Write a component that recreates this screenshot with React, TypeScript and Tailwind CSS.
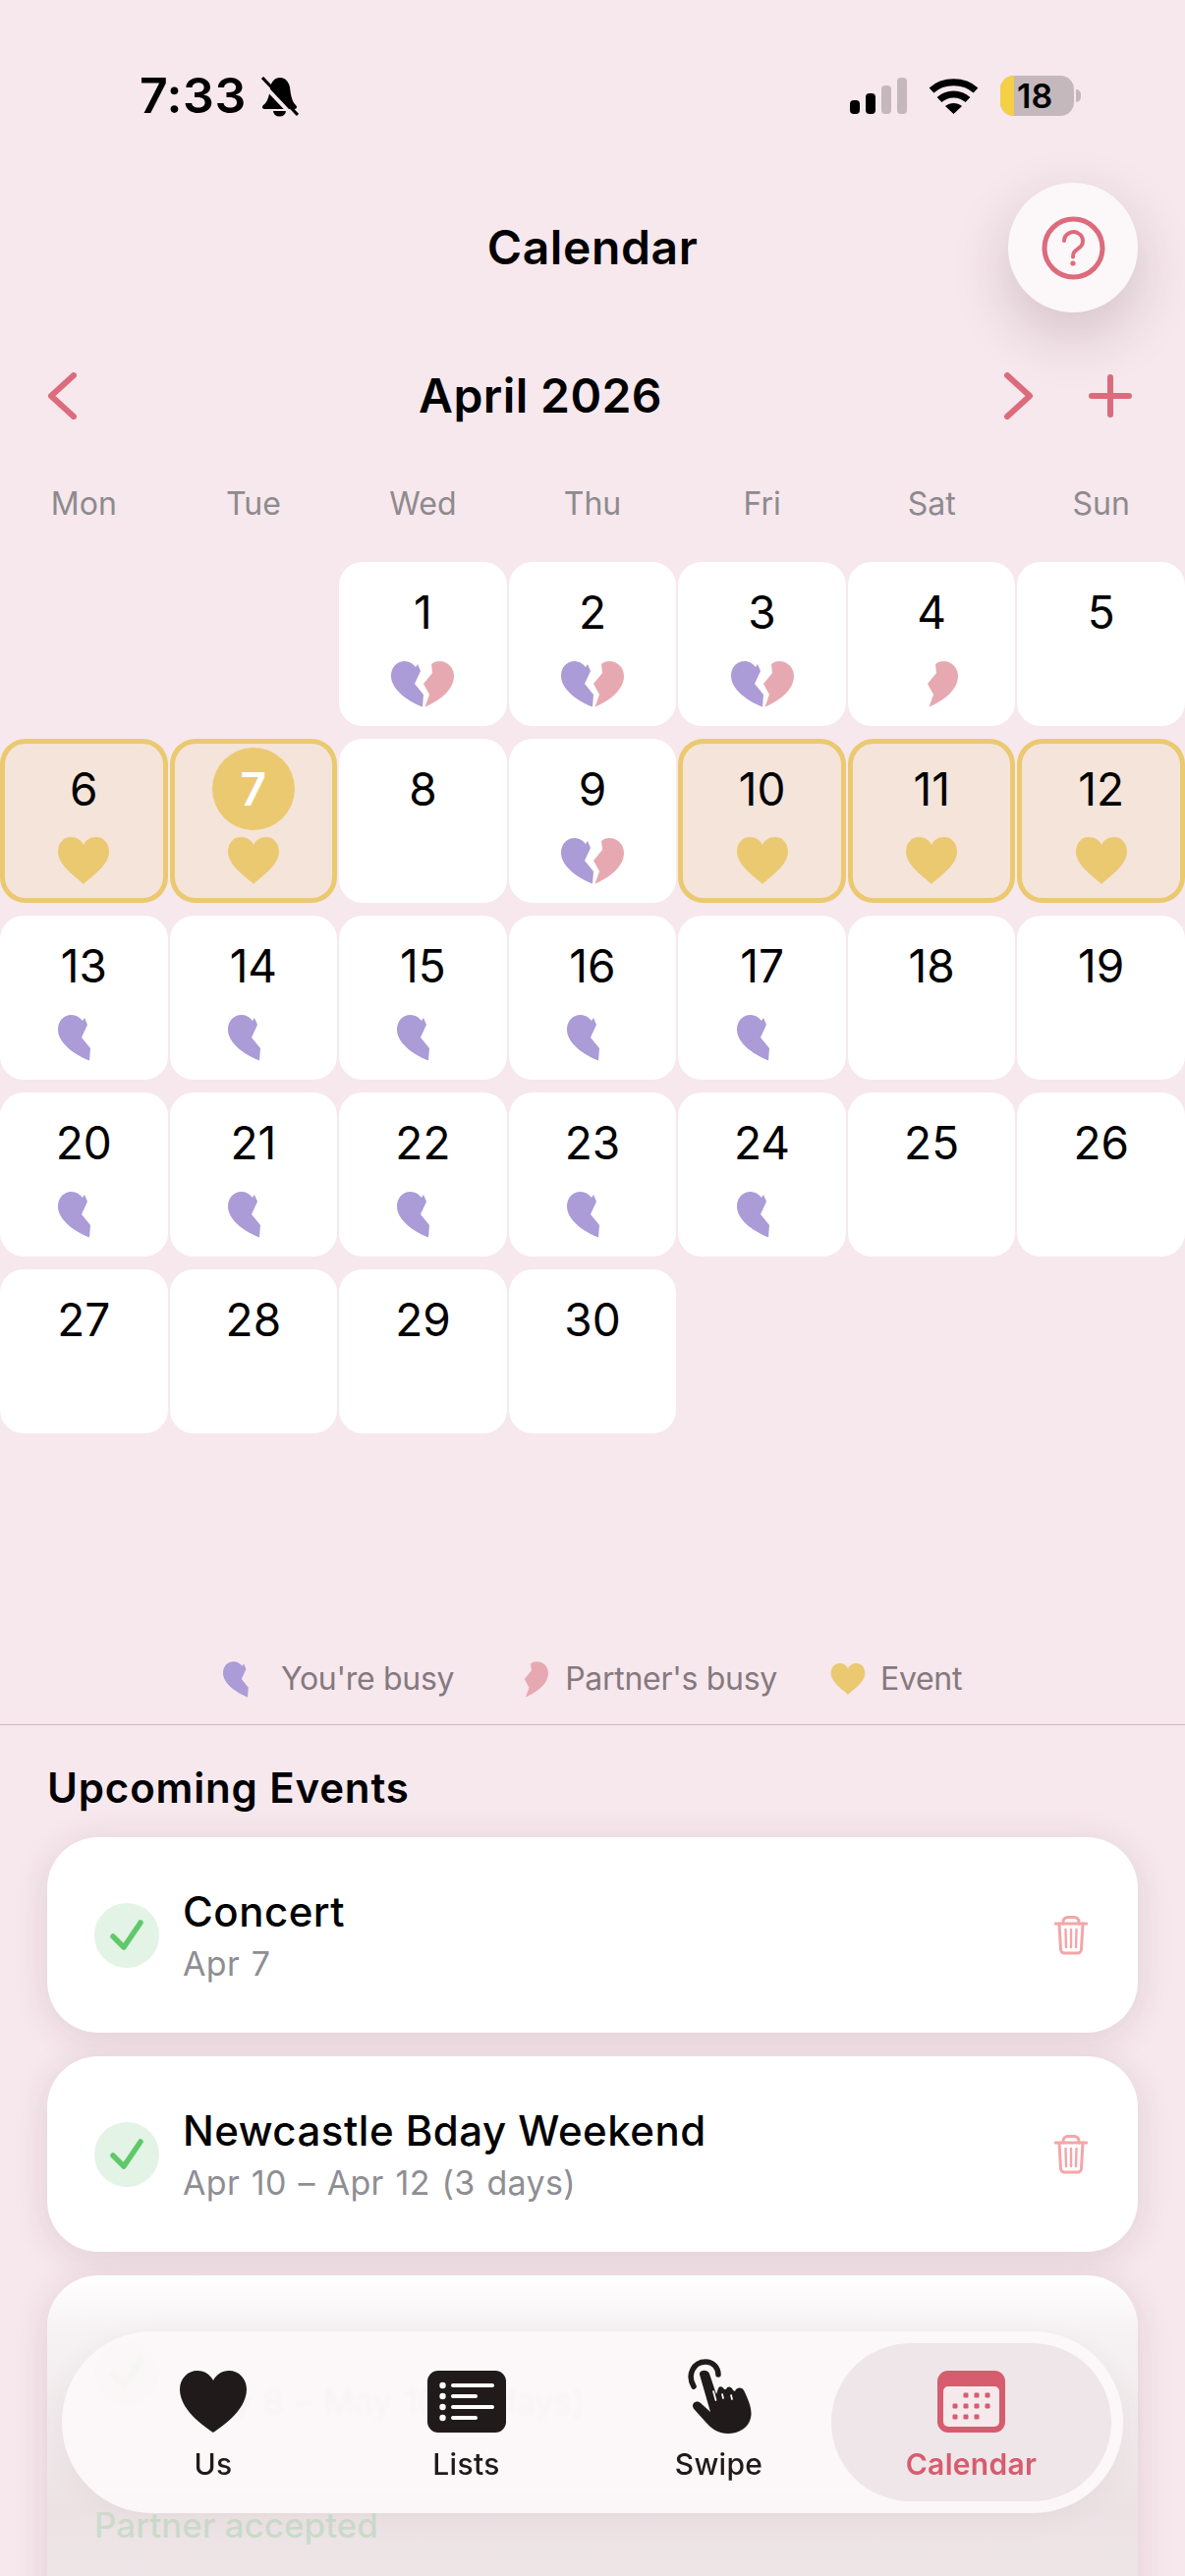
import React from 'react';

type Busy = 'me' | 'partner' | 'both' | 'event' | null;

interface DayProps {
  day: number;
  busy?: Busy;
  today?: boolean;
}

const WEEKDAYS = ['Mon', 'Tue', 'Wed', 'Thu', 'Fri', 'Sat', 'Sun'];

const DAYS: DayProps[] = [
  { day: 1, busy: 'both' },
  { day: 2, busy: 'both' },
  { day: 3, busy: 'both' },
  { day: 4, busy: 'partner' },
  { day: 5 },
  { day: 6, busy: 'event' },
  { day: 7, busy: 'event', today: true },
  { day: 8 },
  { day: 9, busy: 'both' },
  { day: 10, busy: 'event' },
  { day: 11, busy: 'event' },
  { day: 12, busy: 'event' },
  { day: 13, busy: 'me' },
  { day: 14, busy: 'me' },
  { day: 15, busy: 'me' },
  { day: 16, busy: 'me' },
  { day: 17, busy: 'me' },
  { day: 18 },
  { day: 19 },
  { day: 20, busy: 'me' },
  { day: 21, busy: 'me' },
  { day: 22, busy: 'me' },
  { day: 23, busy: 'me' },
  { day: 24, busy: 'me' },
  { day: 25 },
  { day: 26 },
  { day: 27 },
  { day: 28 },
  { day: 29 },
  { day: 30 },
];

const BrokenHeart = ({ left, right, className }: { left?: boolean; right?: boolean; className: string }) => (
  <svg viewBox="0 0 64 47" className={className}>
    {left && (
      <path
        fill="#ab9bd7"
        d="M32 46.5 L33 34 L24 23 L30 10 L27 3 L25 6 C22 2 18 0 14 0 C5 0 0 7 0 15 C0 30 20 42 32 46.5Z"
      />
    )}
    {right && (
      <path
        fill="#e7a9b1"
        d="M34.5 46.5 L39 34 L33 23 L42 12 L41 3 C43 1 46 0 49 0 C58 0 64 7 64 15 C64 30 48 41 34.5 46.5Z"
      />
    )}
  </svg>
);

const GoldHeart = ({ className }: { className: string }) => (
  <svg viewBox="0 0 52 48" className={className}>
    <path
      fill="#ebc971"
      d="M26 48 C22 43 0 30 0 15 C0 6 6 0 13 0 C19 0 24 3 26 8 C28 3 33 0 39 0 C46 0 52 6 52 15 C52 30 30 43 26 48Z"
    />
  </svg>
);

const DayCell = ({ day, busy, today }: DayProps) => {
  const isEvent = busy === 'event';
  return (
    <div
      className={
        isEvent
          ? 'h-[167px] rounded-[26px] bg-[#f5e4da] ring-[5px] ring-inset ring-[#ebc971] flex flex-col items-center pt-[26px]'
          : 'h-[167px] rounded-[24px] bg-white flex flex-col items-center pt-[26px]'
      }
    >
      {today ? (
        <div className="w-[84px] h-[84px] -my-[17px] rounded-full bg-[#ebc971] flex items-center justify-center text-white text-[46px] font-semibold leading-[50px]">
          {day}
        </div>
      ) : (
        <div className="h-[50px] text-[46px] leading-[50px] text-black">{day}</div>
      )}
      <div className="mt-[24px] h-[48px] flex items-center justify-center">
        {isEvent && <GoldHeart className="w-[52px] h-[48px]" />}
        {busy === 'both' && <BrokenHeart left right className="w-[64px] h-[47px]" />}
        {busy === 'me' && <BrokenHeart left className="ml-[12px] w-[64px] h-[47px]" />}
        {busy === 'partner' && <BrokenHeart right className="mr-[10px] w-[64px] h-[47px]" />}
      </div>
    </div>
  );
};

const CheckBadge = () => (
  <div className="w-[66px] h-[66px] shrink-0 rounded-full bg-[#e3f3e6]">
    <svg viewBox="0 0 66 66" className="w-[66px] h-[66px]">
      <path d="M19 34 L30 45 L47 20" fill="none" stroke="#5fc96a" strokeWidth="5.5" strokeLinecap="round" strokeLinejoin="round" />
    </svg>
  </div>
);

const TrashIcon = () => (
  <svg viewBox="0 0 34 40" className="w-[34px] h-[40px] shrink-0" fill="none" stroke="#f3a6a8" strokeLinecap="round">
    <path d="M1 8 H33" strokeWidth="3" />
    <path d="M9 8 V6 a4.5 4.5 0 0 1 4.5-4.5 h7 a4.5 4.5 0 0 1 4.5 4.5 V8" strokeWidth="3" />
    <path d="M5 8 L6.5 34 a4 4 0 0 0 4 4 h13 a4 4 0 0 0 4-4 L29 8" strokeWidth="3" />
    <path d="M11.5 14 L12 32 M17 14 V32 M22.5 14 L22 32" strokeWidth="2.4" />
  </svg>
);

const EventRow = ({ title, date }: { title?: string; date: string }) => (
  <div className="h-[199px] flex items-center pl-[48px] pr-[51px] gap-[24px]">
    <CheckBadge />
    <div className="flex-1">
      <div className="h-[50px] mt-[2px] text-[42px] leading-[50px] font-medium tracking-[0.5px] text-black">{title}</div>
      <div className="mt-[6px] text-[34px] leading-[44px] tracking-[0.3px] [word-spacing:2px] text-[#8e8e93]">{date}</div>
    </div>
    <TrashIcon />
  </div>
);

const cardShadow = 'shadow-[0_6px_36px_rgba(90,50,60,0.13)]';

const StatusBar = () => (
  <div className="h-[41px] mt-[77px] flex items-center pl-[142px] pr-[106px] text-black">
    <span className="text-[50px] font-semibold leading-[41px] tracking-[0.5px]">7:33</span>
    <svg viewBox="0 0 39 42" className="ml-[14px] w-[39px] h-[42px]">
      <path d="M20 2 C25 2 29 6 30 12 C31 20 32 26 36 30 C38 32 37 34 34 34 H5 C2 34 1 32 3 30 C8 26 9 20 10 12 C11 6 15 2 20 2Z" />
      <path d="M13 36 H26 a6.5 5.5 0 0 1 -13 0Z" />
      <path d="M0 6 L33 41" stroke="#f6e8ed" strokeWidth="4" />
      <path d="M2 2 L38 40" stroke="#000" strokeWidth="3.2" />
    </svg>
    <div className="flex-1" />
    <svg viewBox="0 0 58 37" className="w-[58px] h-[37px]">
      <rect x="0" y="23" width="10" height="14" rx="4" />
      <rect x="16" y="16" width="10" height="21" rx="4" />
      <rect x="32" y="8" width="10" height="29" rx="4" fill="#c4b8bc" />
      <rect x="48" y="0" width="10" height="37" rx="4" fill="#c4b8bc" />
    </svg>
    <svg viewBox="0 0 51 37" className="ml-[22px] w-[51px] h-[37px]">
      <path d="M3 13 C15 2 36 2 48 13" fill="none" stroke="#000" strokeWidth="7" />
      <path d="M11 22.500 C19 15 32 15 40 22.500" fill="none" stroke="#000" strokeWidth="7" />
      <path d="M25.500 37 L17 29 C22 25 29 25 34 29Z" />
    </svg>
    <div className="ml-[22px] w-[75px] h-[41px] rounded-[14px] bg-[#c4b8bc] overflow-hidden flex items-center">
      <div className="w-[14px] h-full bg-[#f5cf45]" />
      <span className="ml-[3px] text-[34px] leading-[41px] font-semibold">18</span>
    </div>
    <div className="ml-[2px] w-[5px] h-[13px] rounded-r-full bg-[#c4b8bc]" />
  </div>
);

const HelpButton = () => (
  <div className="absolute right-[48px] top-0 w-[132px] h-[132px] rounded-full bg-[#fcf7f9] shadow-[0_22px_60px_rgba(70,40,50,0.2)] flex items-center justify-center">
    <svg viewBox="0 0 65 65" className="w-[65px] h-[65px]" fill="none" stroke="#dc6b7c">
      <circle cx="32.500" cy="32.500" r="29.500" strokeWidth="5" />
      <path d="M23 25 a9.500 9 0 1 1 15 7.500 c-4 3 -6 4 -6 9" strokeWidth="4" strokeLinecap="round" />
      <circle cx="32" cy="48" r="2.600" fill="#dc6b7c" stroke="none" />
    </svg>
  </div>
);

const MonthNav = () => (
  <div className="h-[60px] mt-[55px] flex items-center pl-[48px] pr-[54px]">
    <svg viewBox="0 0 30 48" className="w-[30px] h-[48px]" fill="none" stroke="#dc6b7c" strokeWidth="6" strokeLinecap="round" strokeLinejoin="round">
      <path d="M27 3 L4 24 L27 45" />
    </svg>
    <div className="flex-1 text-center text-[48px] leading-[60px] font-semibold tracking-[0.4px] text-black">April 2026</div>
    <svg viewBox="0 0 30 48" className="w-[30px] h-[48px]" fill="none" stroke="#dc6b7c" strokeWidth="6" strokeLinecap="round" strokeLinejoin="round">
      <path d="M3 3 L26 24 L3 45" />
    </svg>
    <svg viewBox="0 0 44 44" className="ml-[56px] w-[44px] h-[44px]" fill="none" stroke="#dc6b7c" strokeWidth="6" strokeLinecap="round">
      <path d="M22 3 V41 M3 22 H41" />
    </svg>
  </div>
);

const Legend = () => (
  <div className="h-[40px] mt-[230px] flex items-center pl-[227px] text-[32px] leading-[40px] tracking-[-0.3px] text-[#85797f]">
    <BrokenHeart left className="w-[50px] h-[37px]" />
    <span className="ml-[9px]">You're busy</span>
    <BrokenHeart right className="ml-[46px] w-[50px] h-[37px]" />
    <span className="ml-[17px]">Partner's busy</span>
    <GoldHeart className="ml-[54px] w-[36px] h-[32px]" />
    <span className="ml-[15px]">Event</span>
  </div>
);

const SwipeIcon = () => (
  <svg viewBox="0 0 66 76" className="w-[66px] h-[76px]">
    <path d="M7 28 C0 16 7 3 19 3 C27 3 32 9 32 16" fill="none" stroke="#211a1b" strokeWidth="5.500" strokeLinecap="round" />
    <path
      fill="#211a1b"
      d="M13 16 C12 11 21 10 23 15 L30 36 L32 30 C33 27 37 28 38 31 L40 31 C41 27 46 28 47 32 L49 33 C50 29 56 28 58 32 C63 42 67 52 65 60 C63 70 53 76 42 76 C31 76 24 70 18 63 L9 53 C6 50 5 47 7 45 C9 43 12 43 14 45 L24 54 Z"
    />
    <path d="M27 33 L29.500 42 M36 36 L37 40 M45 37 L46 41" stroke="#fdf8fa" strokeWidth="1.800" strokeLinecap="round" />
  </svg>
);

const TabBar = () => (
  <div className="absolute left-[63px] top-[2373px] w-[1080px] h-[185px] rounded-[92px] bg-[rgba(253,248,250,0.9)] backdrop-blur-[2px] shadow-[0_4px_30px_rgba(90,50,60,0.05)] flex py-[12px] pl-[25px]">
    <div className="w-[258px] flex flex-col items-center pt-[28px] text-[#211a1b]">
      <svg viewBox="0 0 68 63" className="w-[68px] h-[63px]">
        <path
          fill="#211a1b"
          d="M34 63 C30 60 0 42 0 19 C0 8 8 0 18 0 C25 0 31 4 34 10 C37 4 43 0 50 0 C60 0 68 8 68 19 C68 42 38 60 34 63Z"
        />
      </svg>
      <span className="mt-[14px] text-[30px] leading-[36px] font-medium tracking-[0.3px]">Us</span>
    </div>
    <div className="w-[257px] flex flex-col items-center pt-[28px] text-[#211a1b]">
      <svg viewBox="0 0 80 63" className="w-[80px] h-[63px]">
        <rect width="80" height="63" rx="11" fill="#211a1b" />
        {[15, 26, 37, 48].map((y, i) => (
          <React.Fragment key={y}>
            <circle cx="15.500" cy={y} r="3.200" fill="#fff" />
            <rect x="24" y={y - 2} width={i % 2 ? 27 : 44} height="4" rx="2" fill="#fff" />
          </React.Fragment>
        ))}
      </svg>
      <span className="mt-[14px] text-[30px] leading-[36px] font-medium tracking-[0.3px]">Lists</span>
    </div>
    <div className="w-[257px] flex flex-col items-center pt-[16px] text-[#211a1b]">
      <SwipeIcon />
      <span className="mt-[13px] text-[30px] leading-[36px] font-medium tracking-[0.3px]">Swipe</span>
    </div>
    <div className="w-[285px] -ml-[14px] rounded-[81px] bg-[#efe6e9] flex flex-col items-center pt-[28px] text-[#d65c6e]">
      <svg viewBox="0 0 69 63" className="w-[69px] h-[63px]">
        <rect width="69" height="63" rx="11" fill="#d65c6e" />
        <rect x="6" y="16" width="57" height="41" rx="5" fill="#f5e9ec" />
        {[
          [29, 25],
          [40, 25],
          [51, 25],
          [18, 36],
          [29, 36],
          [40, 36],
          [51, 36],
          [18, 47],
          [29, 47],
          [40, 47],
        ].map(([x, y]) => (
          <rect key={`${x}-${y}`} x={x - 2.5} y={y - 2.5} width="5" height="5" rx="1.200" fill="#d65c6e" />
        ))}
      </svg>
      <span className="mt-[14px] text-[30px] leading-[36px] font-semibold tracking-[0.3px]">Calendar</span>
    </div>
  </div>
);

export default function App() {
  return (
    <div className="relative w-[1206px] h-[2622px] overflow-hidden bg-[#f6e8ed] font-['Inter',sans-serif]">
      <StatusBar />

      <div className="relative h-[132px] mt-[68px] flex items-center justify-center">
        <h1 className="text-[48px] font-semibold tracking-[0.6px] text-black">Calendar</h1>
        <HelpButton />
      </div>

      <MonthNav />

      <div className="h-[40px] mt-[60px] grid grid-cols-7 gap-x-[2px] text-center text-[32px] leading-[40px] text-[#8e8a8e]">
        {WEEKDAYS.map(d => (
          <div key={d}>{d}</div>
        ))}
      </div>

      <div className="mt-[39px] grid grid-cols-7 gap-x-[2px] gap-y-[13px]">
        {/* April starts on a Wednesday */}
        <div />
        <div />
        {DAYS.map(d => (
          <DayCell key={d.day} {...d} />
        ))}
      </div>

      <Legend />

      <div className="h-px mt-[26px] bg-[#c9b9bf]" />

      <h2 className="ml-[48px] mt-[39px] h-[50px] text-[42px] leading-[50px] font-semibold tracking-[0.85px] text-black">Upcoming Events</h2>

      <div className="mt-[25px] mx-[48px] flex flex-col gap-[24px]">
        <div className={`rounded-[52px] bg-white ${cardShadow}`}>
          <EventRow title="Concert" date="Apr 7" />
        </div>
        <div className={`rounded-[52px] bg-white ${cardShadow}`}>
          <EventRow title="Newcastle Bday Weekend" date="Apr 10 – Apr 12 (3 days)" />
        </div>
        <div className={`relative h-[400px] shrink-0 rounded-[52px] bg-white ${cardShadow}`}>
          <EventRow date="May 8 – May 10 (3 days)" />
          <div className="mt-[35px] pl-[48px] text-[35px] leading-[40px] font-medium text-[#1ecd50]">Partner accepted</div>
          {/* fade over the last card, the tab bar floats on top of it */}
          <div className="absolute inset-0 rounded-[52px] bg-[linear-gradient(to_bottom,rgba(233,222,225,0)_0px,rgba(233,222,225,0.4)_60px,rgba(233,222,225,0.88)_240px,rgba(233,222,225,0.78)_306px)]" />
        </div>
      </div>

      <TabBar />
    </div>
  );
}
